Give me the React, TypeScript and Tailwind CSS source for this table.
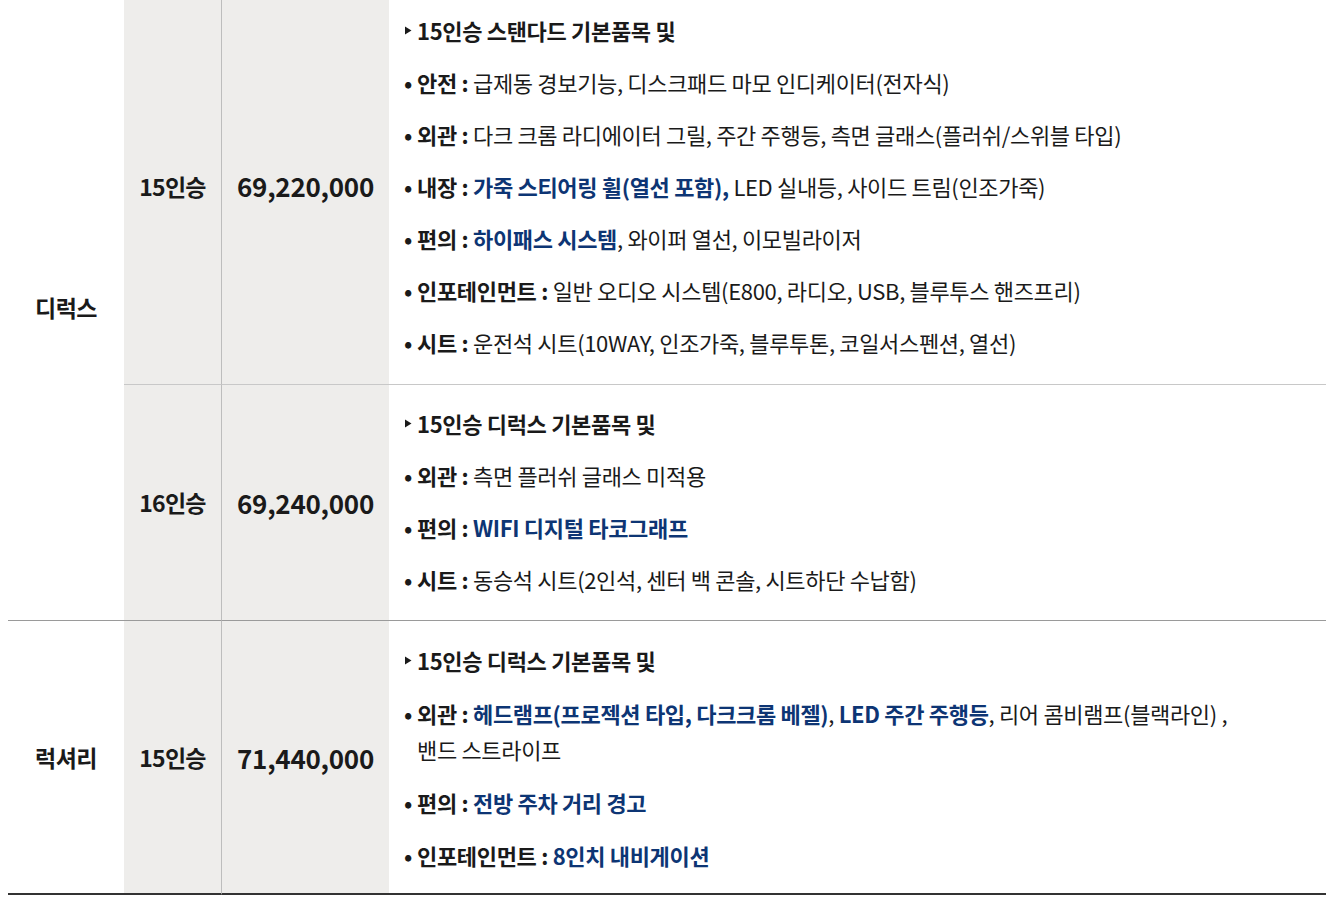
import React from "react";

const B = "#0d3574";

function Tri() {
  return (
    <svg width="9" height="11" viewBox="0 0 9 11" className="mr-[4px] inline-block">
      <polygon points="1,1.5 7.5,5.5 1,9.5" fill="#1a1a1a" />
    </svg>
  );
}

type Seg = { t: string; b?: boolean; blue?: boolean };

function Item({ label, segs, head }: { label?: string; segs: (Seg | "br")[]; head?: boolean }) {
  if (head) {
    return (
      <div className="flex items-center leading-[36px] font-bold">
        <Tri />
        <span>{segs.map((s, i) => (s === "br" ? <br key={i} /> : <span key={i}>{s.t}</span>))}</span>
      </div>
    );
  }
  return (
    <div className="flex leading-[36px]">
      <span className="w-[13px] shrink-0 font-bold">•</span>
      <span>
        <span className="font-bold">{label} : </span>
        {segs.map((s, i) =>
          s === "br" ? (
            <br key={i} />
          ) : (
            <span key={i} className={s.b ? "font-bold" : ""} style={s.blue ? { color: B } : undefined}>
              {s.t}
            </span>
          )
        )}
      </span>
    </div>
  );
}

export default function App() {
  const font = { fontFamily: '"Noto Sans CJK KR", "Noto Sans", sans-serif' };
  const gray = "bg-[#eeedeb]";
  const feat = "pl-[15px] flex flex-col text-[22px] tracking-[-0.015em]";
  return (
    <div className="w-[1326px] h-[901px] bg-white text-[#1a1a1a]" style={font}>
      <div className="ml-[8px] grid grid-cols-[116px_98px_167px_1fr]">
        {/* 디럭스 */}
        <div className="row-span-2 flex items-center justify-center border-b border-[#9a9a9a] text-[23px] font-bold pb-[6px] tracking-[-0.02em]">
          디럭스
        </div>
        {/* row 1 */}
        <div className={`${gray} border-r border-r-[#bdbdbd] border-b border-b-[#c8c8c8] flex items-center justify-center text-[23px] font-bold tracking-[-0.03em] pb-[12px]`}>
          15인승
        </div>
        <div className={`${gray} border-b border-[#c8c8c8] flex items-center justify-center text-[26px] font-bold tracking-[-0.01em] pb-[14px]`}>
          69,220,000
        </div>
        <div className={`border-b border-[#c8c8c8] pt-[12px] pb-[24px] gap-[16px] ${feat}`}>
          <Item head segs={[{ t: "15인승 스탠다드 기본품목 및" }]} />
          <Item label="안전" segs={[{ t: "급제동 경보기능, 디스크패드 마모 인디케이터(전자식)" }]} />
          <Item label="외관" segs={[{ t: "다크 크롬 라디에이터 그릴, 주간 주행등, 측면 글래스(플러쉬/스위블 타입)" }]} />
          <Item
            label="내장"
            segs={[{ t: "가죽 스티어링 휠(열선 포함),", b: true, blue: true }, { t: " LED 실내등, 사이드 트림(인조가죽)" }]}
          />
          <Item label="편의" segs={[{ t: "하이패스 시스템", b: true, blue: true }, { t: ", 와이퍼 열선, 이모빌라이저" }]} />
          <Item label="인포테인먼트" segs={[{ t: "일반 오디오 시스템(E800, 라디오, USB, 블루투스 핸즈프리)" }]} />
          <Item label="시트" segs={[{ t: "운전석 시트(10WAY, 인조가죽, 블루투톤, 코일서스펜션, 열선)" }]} />
        </div>
        {/* row 2 */}
        <div className={`${gray} border-r border-r-[#bdbdbd] border-b border-b-[#9a9a9a] flex items-center justify-center text-[23px] font-bold tracking-[-0.03em]`}>
          16인승
        </div>
        <div className={`${gray} border-b border-[#9a9a9a] flex items-center justify-center text-[26px] font-bold tracking-[-0.01em]`}>
          69,240,000
        </div>
        <div className={`border-b border-[#9a9a9a] pt-[20px] pb-[23px] gap-[16px] ${feat}`}>
          <Item head segs={[{ t: "15인승 디럭스 기본품목 및" }]} />
          <Item label="외관" segs={[{ t: "측면 플러쉬 글래스 미적용" }]} />
          <Item label="편의" segs={[{ t: "WIFI 디지털 타코그래프", b: true, blue: true }]} />
          <Item label="시트" segs={[{ t: "동승석 시트(2인석, 센터 백 콘솔, 시트하단 수납함)" }]} />
        </div>
        {/* row 3 */}
        <div className="border-b-2 border-[#333] flex items-center justify-center text-[23px] font-bold tracking-[-0.02em]">럭셔리</div>
        <div className={`${gray} border-r border-r-[#bdbdbd] border-b-2 border-b-[#333] flex items-center justify-center text-[23px] font-bold tracking-[-0.03em]`}>
          15인승
        </div>
        <div className={`${gray} border-b-2 border-[#333] flex items-center justify-center text-[26px] font-bold tracking-[-0.01em]`}>
          71,440,000
        </div>
        <div className={`border-b-2 border-[#333] pt-[21px] pb-[20px] gap-[17px] ${feat}`}>
          <Item head segs={[{ t: "15인승 디럭스 기본품목 및" }]} />
          <Item
            label="외관"
            segs={[
              { t: "헤드램프(프로젝션 타입, 다크크롬 베젤)", b: true, blue: true },
              { t: ", " },
              { t: "LED 주간 주행등", b: true, blue: true },
              { t: ", 리어 콤비램프(블랙라인) ," },
              "br",
              { t: "밴드 스트라이프" },
            ]}
          />
          <Item label="편의" segs={[{ t: "전방 주차 거리 경고", b: true, blue: true }]} />
          <Item label="인포테인먼트" segs={[{ t: "8인치 내비게이션", b: true, blue: true }]} />
        </div>
      </div>
    </div>
  );
}
